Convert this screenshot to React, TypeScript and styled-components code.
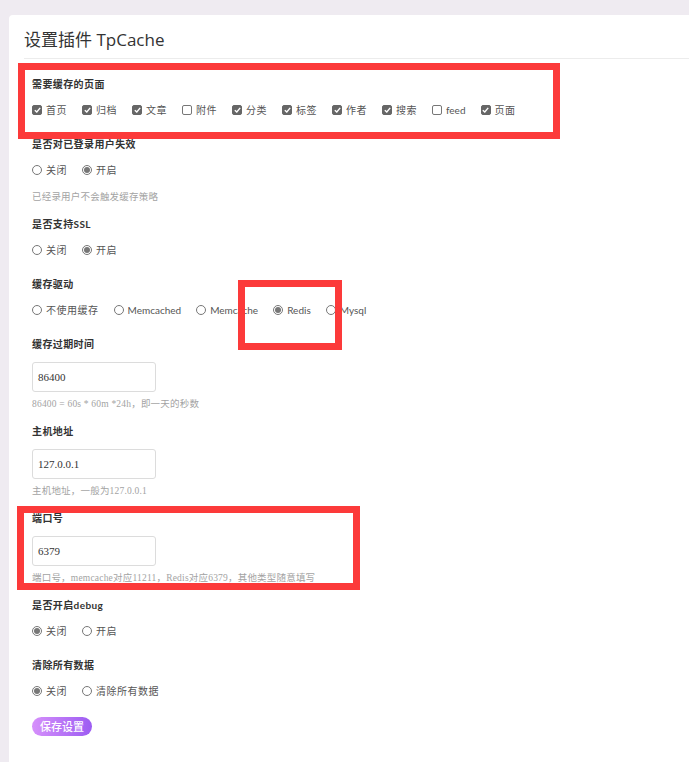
import { createGlobalStyle } from 'styled-components'
import styled from 'styled-components'

const GlobalStyle = createGlobalStyle`
  html, body {
    margin: 0;
    padding: 0;
    background: #efebf1;
  }
  * { box-sizing: border-box; }
`

const Page = styled.div`
  position: relative;
  min-height: 100vh;
  padding: 15px 0 0 9px;
`

const Card = styled.div`
  background: #fff;
  border-radius: 4px 0 0 0;
  padding: 0 0 0 15px;
  min-height: calc(100vh - 15px);
`

const Header = styled.div`
  padding: 15px 0 8px;
  border-bottom: 1px solid #ececec;
`

const Title = styled.h1`
  margin: 0;
  height: 20px;
  font-family: "Open Sans", "Noto Sans CJK SC", sans-serif;
  font-weight: 400;
  font-size: 17px;
  line-height: 20px;
  color: #333;
`

const Body = styled.div`
  padding: 18px 8px 20px;
  font-family: Lato, "Noto Sans CJK SC", sans-serif;
`

const Group = styled.div<{ $hint?: boolean }>`
  padding-bottom: ${p => (p.$hint ? 12 : 20)}px;
`

const Label = styled.div`
  height: 15px;
  font-size: 10px;
  line-height: 15px;
  font-weight: 700;
  letter-spacing: 0.4px;
  color: #333;
  margin-bottom: 10px;
`

const Row = styled.div`
  display: flex;
  align-items: center;
  height: 15px;
`

const Option = styled.label<{ $latin?: boolean }>`
  display: inline-flex;
  align-items: center;
  gap: 4px;
  margin-right: 15px;
  font-size: 10px;
  letter-spacing: ${p => (p.$latin ? 0 : 0.5)}px;
  color: #555;
  white-space: nowrap;
`

const Box = styled.span<{ $on?: boolean }>`
  width: 10px;
  height: 10px;
  border-radius: 2px;
  border: 1px solid ${p => (p.$on ? '#666' : '#777')};
  background: ${p => (p.$on ? '#666' : '#fff')};
  display: inline-flex;
  align-items: center;
  justify-content: center;
  flex: none;
  svg { display: block; }
`

const Radio = styled.span<{ $on?: boolean }>`
  width: 10px;
  height: 10px;
  border-radius: 50%;
  border: 1px solid #777;
  background: #fff;
  display: inline-flex;
  align-items: center;
  justify-content: center;
  flex: none;
  &::after {
    content: '';
    width: 6px;
    height: 6px;
    border-radius: 50%;
    background: ${p => (p.$on ? '#777' : 'transparent')};
  }
`

const Input = styled.div`
  width: 124px;
  height: 30px;
  border: 1px solid #dcdcdc;
  border-radius: 3px;
  padding: 0 5px;
  display: flex;
  align-items: center;
  font-family: "Liberation Serif", "Noto Sans CJK SC", serif;
  font-size: 11px;
  color: #333;
`

const Hint = styled.div<{ $gap: number }>`
  margin-top: ${p => p.$gap}px;
  height: 15px;
  font-family: "Liberation Serif", "Noto Sans CJK SC", serif;
  font-size: 9.5px;
  line-height: 15px;
  letter-spacing: 0.2px;
  color: #a3a3a3;
  white-space: nowrap;
`

const SaveButton = styled.button`
  display: block;
  width: 60px;
  height: 19px;
  margin-top: -1px;
  border: 0;
  border-radius: 10px;
  padding: 0;
  background: linear-gradient(90deg, #d690fb 0%, #9c5cf2 100%);
  color: #fff;
  font-family: "Noto Sans CJK SC", sans-serif;
  font-size: 11px;
  font-weight: 500;
  line-height: 19px;
`

const Mark = styled.div<{ $x: number; $y: number; $w: number; $h: number }>`
  position: absolute;
  left: ${p => p.$x}px;
  top: ${p => p.$y}px;
  width: ${p => p.$w}px;
  height: ${p => p.$h}px;
  border: 7px solid #fc3a3a;
  pointer-events: none;
`

const isLatin = (text: string) => /^[A-Za-z]+$/.test(text)

function Check({ on, text }: { on?: boolean; text: string }) {
  return (
    <Option $latin={isLatin(text)}>
      <Box $on={on}>
        {on && (
          <svg width="7" height="6" viewBox="0 0 7 6">
            <path d="M0.8 3.2 L2.8 5 L6.2 0.9" fill="none" stroke="#fff" strokeWidth="1.4" />
          </svg>
        )}
      </Box>
      {text}
    </Option>
  )
}

function Choice({ on, text }: { on?: boolean; text: string }) {
  return (
    <Option $latin={isLatin(text)}>
      <Radio $on={on} />
      {text}
    </Option>
  )
}

const pages = [
  { text: '首页', on: true },
  { text: '归档', on: true },
  { text: '文章', on: true },
  { text: '附件', on: false },
  { text: '分类', on: true },
  { text: '标签', on: true },
  { text: '作者', on: true },
  { text: '搜索', on: true },
  { text: 'feed', on: false },
  { text: '页面', on: true },
]

export default function App() {
  return (
    <Page>
      <GlobalStyle />
      <Card>
        <Header>
          <Title>设置插件 TpCache</Title>
        </Header>
        <Body>
          <Group>
            <Label>需要缓存的页面</Label>
            <Row>
              {pages.map(p => <Check key={p.text} on={p.on} text={p.text} />)}
            </Row>
          </Group>
          <Group $hint>
            <Label>是否对已登录用户失效</Label>
            <Row>
              <Choice text="关闭" />
              <Choice on text="开启" />
            </Row>
            <Hint $gap={13}>已经录用户不会触发缓存策略</Hint>
          </Group>
          <Group>
            <Label>是否支持SSL</Label>
            <Row>
              <Choice text="关闭" />
              <Choice on text="开启" />
            </Row>
          </Group>
          <Group>
            <Label>缓存驱动</Label>
            <Row>
              <Choice text="不使用缓存" />
              <Choice text="Memcached" />
              <Choice text="Memcache" />
              <Choice on text="Redis" />
              <Choice text="Mysql" />
            </Row>
          </Group>
          <Group $hint>
            <Label>缓存过期时间</Label>
            <Input>86400</Input>
            <Hint $gap={5}>86400 = 60s * 60m *24h，即一天的秒数</Hint>
          </Group>
          <Group $hint>
            <Label>主机地址</Label>
            <Input>127.0.0.1</Input>
            <Hint $gap={5}>主机地址，一般为127.0.0.1</Hint>
          </Group>
          <Group $hint>
            <Label>端口号</Label>
            <Input>6379</Input>
            <Hint $gap={5}>端口号，memcache对应11211，Redis对应6379，其他类型随意填写</Hint>
          </Group>
          <Group>
            <Label>是否开启debug</Label>
            <Row>
              <Choice on text="关闭" />
              <Choice text="开启" />
            </Row>
          </Group>
          <Group>
            <Label>清除所有数据</Label>
            <Row>
              <Choice on text="关闭" />
              <Choice text="清除所有数据" />
            </Row>
          </Group>
          <SaveButton>保存设置</SaveButton>
        </Body>
      </Card>
      <Mark $x={18} $y={63} $w={542} $h={76} />
      <Mark $x={238} $y={280} $w={104} $h={70} />
      <Mark $x={17} $y={506} $w={343} $h={84} />
    </Page>
  )
}
